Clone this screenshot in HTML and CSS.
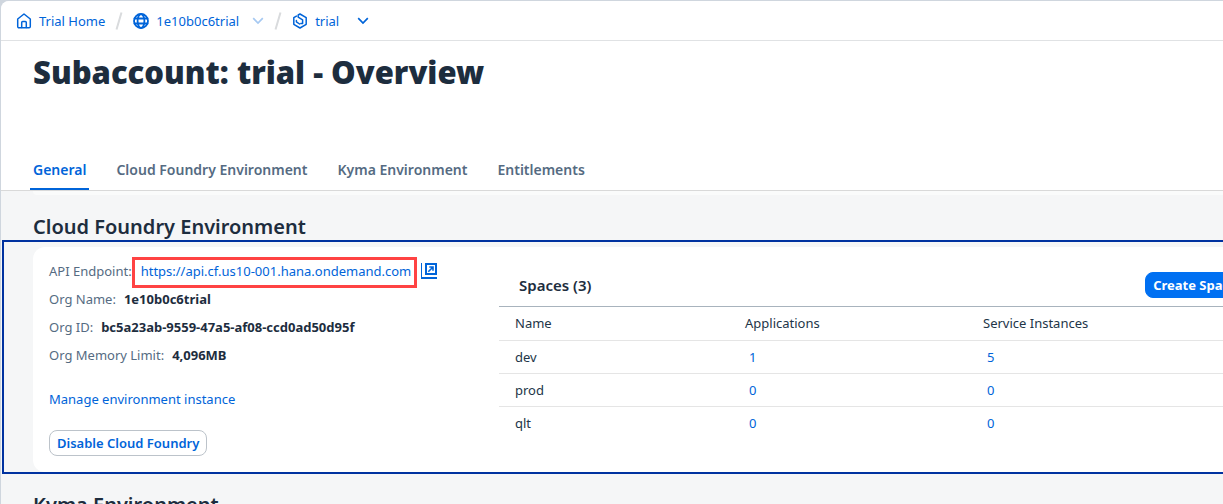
FILE: index.html
```html
<!DOCTYPE html>
<html lang="en">
<head>
<meta charset="utf-8">
<title>Subaccount: trial - Overview</title>
<link rel="stylesheet" href="styles.css">
</head>
<body>
<div class="shell">
  <nav class="crumbs" aria-label="Breadcrumb">
    <a class="crumb" href="#home">
      <svg class="icon" viewBox="0 0 16 16" aria-hidden="true"><path d="M1.700 6 8 1l6.300 5v7.500a1.300 1.300 0 0 1-1.300 1.300H3a1.300 1.300 0 0 1-1.300-1.300z"/><path d="M5.700 14.600V9.600a1 1 0 0 1 1-1h2.600a1 1 0 0 1 1 1v5"/></svg>
      <span>Trial Home</span>
    </a>
    <svg class="slash" viewBox="0 0 8 18" aria-hidden="true"><path d="M6.500 0.500 1.500 17.500"/></svg>
    <a class="crumb" href="#account">
      <svg class="icon icon-globe" viewBox="0 0 16 16" aria-hidden="true"><circle cx="8" cy="8" r="7"/><ellipse cx="8" cy="8" rx="3.400" ry="7"/><path d="M1.500 5.500h13M1.500 10.500h13"/></svg>
      <span>1e10b0c6trial</span>
    </a>
    <button class="chevron chevron-soft" type="button" aria-label="Switch global account"><svg viewBox="0 0 12 8" aria-hidden="true"><path d="M1.200 1.200 6 6l4.800-4.800"/></svg></button>
    <svg class="slash" viewBox="0 0 8 18" aria-hidden="true"><path d="M6.500 0.500 1.500 17.500"/></svg>
    <a class="crumb" href="#trial">
      <svg class="icon" viewBox="0 0 16 16" aria-hidden="true"><path d="M4.400 3.100 1.800 4.700v6.600L8 15l6.200-3.700V4.700L8 1 6.200 2v2.200l4.400 2.600v3.600H8.800"/><path d="M4.400 7.600v1.200l3.200 2.200"/></svg>
      <span>trial</span>
    </a>
    <button class="chevron chevron-last" type="button" aria-label="Switch subaccount"><svg viewBox="0 0 12 8" aria-hidden="true"><path d="M1.200 1.200 6 6l4.800-4.800"/></svg></button>
  </nav>
  <header class="page-head">
    <h1>Subaccount: trial - Overview</h1>
    <nav class="tabs" aria-label="Sections">
      <a class="tab tab-active" href="#general" aria-current="page">General</a>
      <a class="tab" href="#cf">Cloud Foundry Environment</a>
      <a class="tab" href="#kyma">Kyma Environment</a>
      <a class="tab" href="#entitlements">Entitlements</a>
    </nav>
  </header>
  <main class="content">
    <div class="card-tail"></div>
    <h2 class="cf-title">Cloud Foundry Environment</h2>
    <section class="focus-frame">
      <div class="card">
        <div class="details">
          <div class="facts">
            <div class="fact"><span class="label">API Endpoint:</span><span class="endpoint"><a href="#endpoint">https://api.cf.us10-001.hana.ondemand.com</a></span><a class="open" href="#open" aria-label="Open endpoint"><svg viewBox="0 0 16 16" aria-hidden="true"><path class="thin" d="M.5 0v16"/><path d="M0 15h16M5 1h10v10H5z"/><path class="arrow" d="M7.300 8.700l4.200-4.200M8.300 4h3.700v3.700"/></svg></a></div>
            <div class="fact"><span class="label">Org Name:</span><strong>1e10b0c6trial</strong></div>
            <div class="fact"><span class="label">Org ID:</span><strong>bc5a23ab-9559-47a5-af08-ccd0ad50d95f</strong></div>
            <div class="fact"><span class="label">Org Memory Limit:</span><strong>4,096MB</strong></div>
          </div>
          <a class="manage" href="#manage">Manage environment instance</a>
          <button class="btn" type="button">Disable Cloud Foundry</button>
        </div>
        <div class="spaces">
          <div class="toolbar">
            <h3 id="spaces-title">Spaces (3)</h3>
            <button class="btn btn-primary" type="button">Create Space</button>
          </div>
          <table aria-labelledby="spaces-title">
            <colgroup><col class="col-name"><col class="col-apps"><col></colgroup>
            <thead><tr><th scope="col">Name</th><th scope="col">Applications</th><th scope="col">Service Instances</th></tr></thead>
            <tbody>
              <tr><td>dev</td><td><a href="#dev-apps">1</a></td><td><a href="#dev-services">5</a></td></tr>
              <tr><td>prod</td><td><a href="#prod-apps">0</a></td><td><a href="#prod-services">0</a></td></tr>
              <tr><td>qlt</td><td><a href="#qlt-apps">0</a></td><td><a href="#qlt-services">0</a></td></tr>
            </tbody>
          </table>
        </div>
      </div>
    </section>
    <h2 class="kyma-title">Kyma Environment</h2>
  </main>
</div>
</body>
</html>
```
FILE: styles.css
```css
* { box-sizing: border-box; }
html { background: #cfd6de; }
body {
  margin: 0;
  height: 100vh;
  overflow: hidden;
  font: 13px/20px "Noto Sans", "Open Sans", sans-serif;
  color: #223548;
}
a { color: #0064d9; text-decoration: none; }
h1, h2, h3 { margin: 0; color: #1d2d3e; }
svg { fill: none; stroke: currentColor; }
button { font: inherit; cursor: pointer; }

.shell {
  min-height: 100vh;
  margin: 1px 0 0 1px;
  border-top-left-radius: 8px;
  background: #f5f6f7;
  overflow: hidden;
}
.crumbs {
  display: flex;
  align-items: center;
  height: 40px;
  padding-left: 15px;
  background: #fff;
  border-bottom: 1px solid #e0e2e4;
}
.crumb { display: flex; align-items: center; gap: 7px; }
.icon { width: 16px; height: 16px; stroke-width: 1.500; stroke-linejoin: round; stroke-linecap: round; }
.icon-globe { stroke-width: 1.800; }
.slash { width: 8px; height: 18px; margin: 0 10px; color: #d9dbdd; stroke-width: 2; }
.chevron { display: flex; margin: 0 0 0 13px; padding: 0; border: 0; background: none; color: #0064d9; }
.chevron svg { width: 12px; height: 8px; stroke-width: 1.700; }
.chevron-soft { color: #a6c9f2; }
.chevron-last { margin-left: 18px; }

.page-head {
  display: flex;
  flex-direction: column;
  justify-content: space-between;
  height: 150px;
  padding: 11px 0 0 32px;
  background: #fff;
  border-bottom: 1px solid #d9d9d9;
}
h1 { font-size: 31px; line-height: 40px; font-weight: 900; }
.tabs { display: flex; gap: 24px; margin-left: -3px; }
.tab { padding: 0 3px; height: 30px; font-size: 14px; font-weight: 600; color: #556b82; }
.tab-active { color: #0064d9; border-bottom: 2px solid #0064d9; border-radius: 2px 2px 0 0; }

.card-tail { height: 4px; margin-left: 32px; background: #fafbfb; border-bottom-left-radius: 4px; }
h2 { margin-left: 32px; font-size: 20px; line-height: 26px; font-weight: 600; }
.cf-title { padding: 19px 0 0; }
.kyma-title { margin-top: 18px; }
.focus-frame {
  margin: 0 -48px 0 1px;
  padding: 5px 8px 0 29px;
  border: 2px solid #0032a0;
}
.card {
  display: flex;
  gap: 60px;
  padding: 14px 16px 16px;
  background: #fff;
  border-radius: 12px;
}
.details { flex: none; width: 390px; }
.facts { display: grid; gap: 8px; }
.fact { display: flex; gap: 8px; white-space: nowrap; }
.label { color: #556b82; }
strong { font-weight: 700; color: #1d2d3e; }
.endpoint { position: relative; margin: 0 2px 0 1px; }
.endpoint::after {
  content: "";
  position: absolute;
  inset: -4px -6px -7px -9px;
  border: 3px solid #ff4343;
  pointer-events: none;
}
.open svg { display: block; width: 16px; height: 16px; margin-top: 2px; stroke-width: 2; }
.open .thin { stroke-width: 1; }
.open .arrow { stroke-width: 1.600; }
.manage { display: block; margin: 24px 0 21px; }
.btn {
  display: block;
  height: 26px;
  padding: 0 7px;
  border: 1px solid #bcc3ca;
  border-radius: 8px;
  background: #fff;
  color: #0064d9;
  font-weight: 600;
}
.btn-primary { background: #0070f2; border-color: #0070f2; color: #fff; font-weight: 700; }
.spaces { flex: 1; padding-top: 11px; }
.toolbar {
  display: flex;
  align-items: center;
  justify-content: space-between;
  height: 35px;
  padding: 0 0 9px 20px;
  border-bottom: 1px solid #a8b3bd;
}
h3 { font-size: 15px; line-height: 20px; font-weight: 600; }
table { width: 100%; table-layout: fixed; border-collapse: collapse; }
.col-name { width: 230px; }
.col-apps { width: 238px; }
th, td { height: 33px; padding: 0 16px; text-align: left; font-weight: 400; border-bottom: 1px solid #e5e5e5; }
td a { margin-left: 4px; }
tbody tr:last-child td { border-bottom: 0; }
```
